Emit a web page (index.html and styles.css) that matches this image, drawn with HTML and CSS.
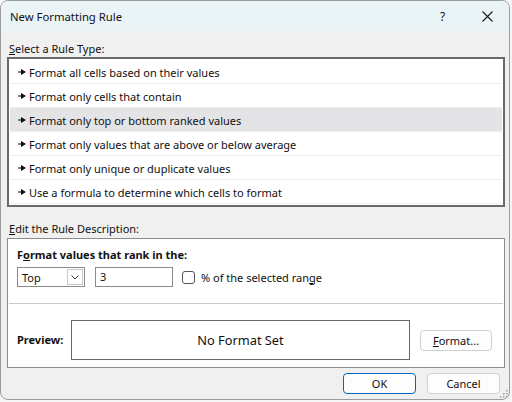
FILE: index.html
```html
<!DOCTYPE html>
<html>
<head>
<meta charset="utf-8">
<link rel="stylesheet" href="styles.css">
</head>
<body>
<div class="dialog">
  <div class="titlebar">
    <span class="title">New Formatting Rule</span>
    <span class="help">?</span>
    <span class="close"><svg width="11" height="11" viewBox="0 0 11 11"><path d="M0.5 0.5 L10.5 10.5 M10.5 0.5 L0.5 10.5" stroke="#1a1a1a" stroke-width="1.1" fill="none"/></svg></span>
  </div>
  <div class="content">
    <div class="label"><u>S</u>elect a Rule Type:</div>
    <div class="listbox">
      <div class="item"><svg class="arr" width="8" height="6" viewBox="0 0 8 6"><rect x="0" y="2.5" width="4" height="1" fill="#111"/><polygon points="3,0 8,3 3,6" fill="#111"/></svg>Format all cells based on their values</div>
      <div class="item"><svg class="arr" width="8" height="6" viewBox="0 0 8 6"><rect x="0" y="2.5" width="4" height="1" fill="#111"/><polygon points="3,0 8,3 3,6" fill="#111"/></svg>Format only cells that contain</div>
      <div class="item selected"><svg class="arr" width="8" height="6" viewBox="0 0 8 6"><rect x="0" y="2.5" width="4" height="1" fill="#111"/><polygon points="3,0 8,3 3,6" fill="#111"/></svg>Format only top or bottom ranked values</div>
      <div class="item"><svg class="arr" width="8" height="6" viewBox="0 0 8 6"><rect x="0" y="2.5" width="4" height="1" fill="#111"/><polygon points="3,0 8,3 3,6" fill="#111"/></svg>Format only values that are above or below average</div>
      <div class="item"><svg class="arr" width="8" height="6" viewBox="0 0 8 6"><rect x="0" y="2.5" width="4" height="1" fill="#111"/><polygon points="3,0 8,3 3,6" fill="#111"/></svg>Format only unique or duplicate values</div>
      <div class="item"><svg class="arr" width="8" height="6" viewBox="0 0 8 6"><rect x="0" y="2.5" width="4" height="1" fill="#111"/><polygon points="3,0 8,3 3,6" fill="#111"/></svg>Use a formula to determine which cells to format</div>
    </div>
    <div class="label label2"><u>E</u>dit the Rule Description:</div>
    <div class="descbox">
      <div class="top">
        <div class="bold">F<u>o</u>rmat values that rank in the:</div>
        <div class="row">
          <div class="combo"><span class="ctext">Top</span><span class="cbtn"><svg width="8" height="5" viewBox="0 0 8 5"><path d="M0.5 0.5 L4 4 L7.5 0.5" stroke="#333" stroke-width="1" fill="none"/></svg></span></div>
          <div class="input">3</div>
          <div class="check"></div>
          <span class="chklabel">% of the selected ran<u>g</u>e</span>
        </div>
      </div>
      <div class="sep"></div>
      <div class="preview">
        <span class="bold plabel">Preview:</span>
        <div class="pbox">No Format Set</div>
        <div class="btn fmt"><u>F</u>ormat...</div>
      </div>
    </div>
    <div class="buttons">
      <div class="btn ok">OK</div>
      <div class="btn cancel">Cancel</div>
    </div>
  </div>
  <svg class="grip" width="8" height="8" viewBox="0 0 8 8"><g fill="#a0a0a0"><rect x="6" y="0" width="1.5" height="1.5"/><rect x="3" y="3" width="1.5" height="1.5"/><rect x="6" y="3" width="1.5" height="1.5"/><rect x="0" y="6" width="1.5" height="1.5"/><rect x="3" y="6" width="1.5" height="1.5"/><rect x="6" y="6" width="1.5" height="1.5"/></g></svg>
</div>
</body>
</html>
```

FILE: styles.css
```css
html, body {
  margin: 0;
  padding: 0;
}
body {
  background: #f6f6f6;
  font-family: "Noto Sans", "Open Sans", sans-serif;
  font-size: 11px;
  color: #111;
  width: 512px;
  height: 402px;
  overflow: hidden;
}
.dialog {
  position: relative;
  box-sizing: border-box;
  width: 510px;
  height: 400px;
  border: 1px solid #9c9c9c;
  border-radius: 8px;
  overflow: hidden;
  background: #f0f0f0;
  display: flex;
  flex-direction: column;
}
.titlebar {
  height: 30px;
  background: #eaf4f7;
  display: flex;
  align-items: center;
  padding-left: 9px;
  flex: none;
}
.title {
  font-size: 11.3px;
  flex: 1;
}
.help {
  font-size: 12px;
  width: 10px;
  margin-right: 32px;
}
.close {
  width: 11px;
  height: 11px;
  margin-right: 16px;
  display: flex;
}
.content {
  padding: 10px 5px 0 6px;
  display: flex;
  flex-direction: column;
}
.label {
  line-height: 16px;
  height: 16px;
  padding-left: 2px;
}
.label2 {
  margin-top: 14px;
}
.listbox {
  margin-top: 0;
  width: 498px;
  box-sizing: border-box;
  border: 2px solid #6a6a6a;
  background: #fff;
  padding: 1px;
  height: 150px;
}
.item {
  height: 24px;
  box-sizing: border-box;
  border-bottom: 1px solid #efefef;
  display: flex;
  align-items: center;
  padding: 1px 0 0 8px;
}
.item.selected {
  background: #e4e4e7;
}
.arr {
  margin-right: 3px;
  flex: none;
}
.descbox {
  margin-top: 1px;
  width: 498px;
  height: 130px;
  box-sizing: border-box;
  border: 1px solid #8c8c8c;
  background: #fff;
  display: flex;
  flex-direction: column;
}
.top {
  padding: 8px 0 0 9px;
  height: 64px;
  box-sizing: border-box;
}
.bold {
  font-weight: bold;
  line-height: 16px;
}
.row {
  margin-top: 4px;
  display: flex;
  align-items: center;
  height: 20px;
}
.combo {
  width: 68px;
  height: 20px;
  box-sizing: border-box;
  border: 1px solid #8a8a8a;
  display: flex;
  align-items: center;
  justify-content: space-between;
  padding: 0 1px 0 4px;
}
.cbtn {
  width: 16px;
  height: 16px;
  box-sizing: border-box;
  border: 1px solid #c8c8c8;
  display: flex;
  align-items: center;
  justify-content: center;
}
.input {
  margin-left: 10px;
  width: 78px;
  height: 20px;
  box-sizing: border-box;
  border: 1px solid #8a8a8a;
  padding-left: 4px;
  line-height: 18px;
}
.check {
  margin-left: 9px;
  width: 13px;
  height: 13px;
  box-sizing: border-box;
  border: 1px solid #555;
  border-radius: 3px;
}
.chklabel {
  margin-left: 6px;
}
.sep {
  margin: 0 1px;
  height: 1px;
  background: #cbcbcb;
  flex: none;
}
.preview {
  display: flex;
  align-items: center;
  padding: 16px 0 0 9px;
}
.plabel {
  width: 54px;
}
.pbox {
  width: 339px;
  height: 40px;
  box-sizing: border-box;
  border: 1px solid #666;
  display: flex;
  align-items: center;
  justify-content: center;
  font-size: 12.8px;
}
.btn {
  box-sizing: border-box;
  border: 1px solid #d0d0d0;
  border-radius: 4px;
  background: #fdfdfd;
  display: flex;
  align-items: center;
  justify-content: center;
  height: 21px;
}
.fmt {
  margin-left: 10px;
  width: 72px;
}
.buttons {
  margin-top: 5px;
  display: flex;
  justify-content: flex-end;
  padding-right: 4px;
}
.ok {
  width: 73px;
  border-color: #0067c0;
}
.cancel {
  width: 73px;
  margin-left: 11px;
}
.grip {
  position: absolute;
  right: 1px;
  bottom: 1px;
}
```
